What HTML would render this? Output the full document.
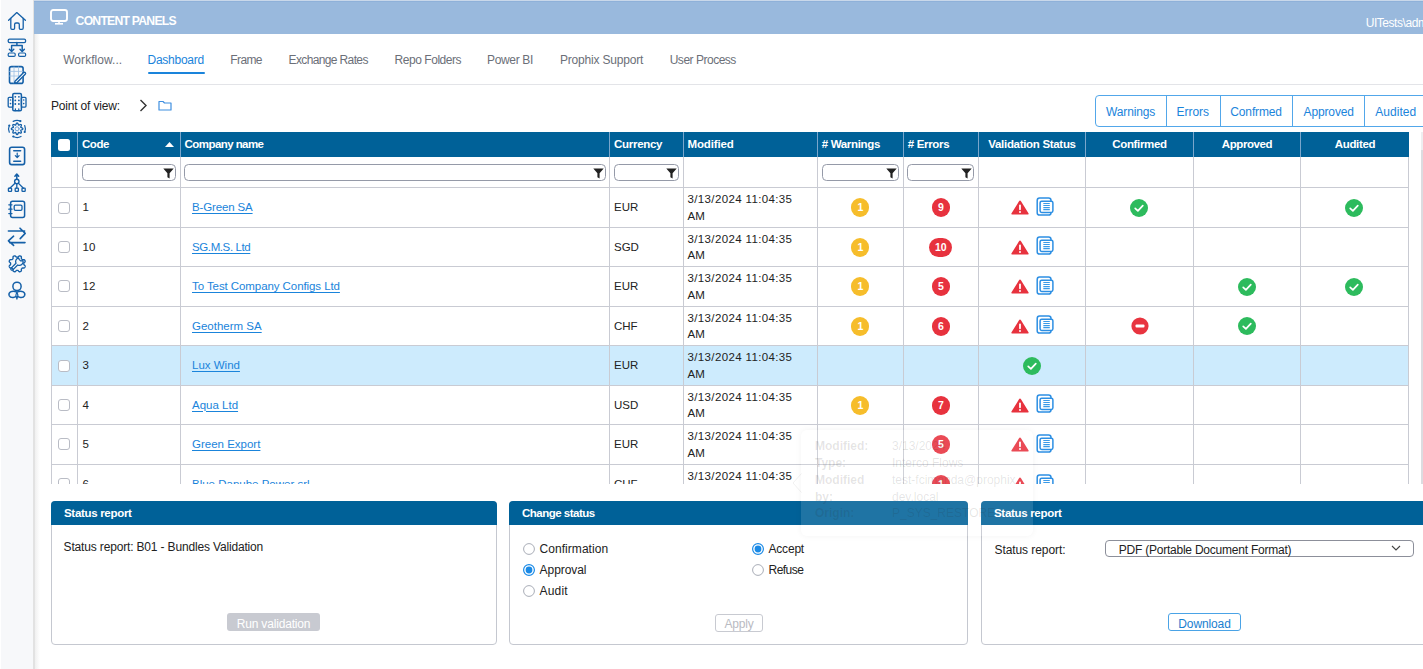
<!DOCTYPE html><html><head><meta charset="utf-8"><style>
*{box-sizing:border-box;margin:0;padding:0}
html,body{width:1423px;height:669px;overflow:hidden}
body{position:relative;background:#fff;font-family:"Liberation Sans", sans-serif;color:#222;}
.ab{position:absolute}
.t{position:absolute;white-space:nowrap;line-height:1}
</style></head><body>
<div class="ab" style="left:1px;top:0;width:32px;height:669px;background:#f7f8fa"></div>
<div class="ab" style="left:33px;top:0;width:2px;height:669px;background:#e2e2e2"></div>
<div class="ab" style="left:35px;top:34px;width:5px;height:635px;background:linear-gradient(90deg,#f0f0f0,#fff)"></div>
<svg class="ab" style="left:0px;top:0px" width="34" height="310" viewBox="0 0 34 310" fill="none" stroke="#1560a8" stroke-width="1.3" stroke-linecap="round" stroke-linejoin="round">
<path d="M8.6 20.2 L16.8 12.6 L25.4 20.2"/>
<path d="M10.8 18.3 V28 Q10.8 29.3 12 29.3 H13.6 Q14.6 29.3 14.6 28.3 V24.5 Q14.6 23 16 23 H17.8 Q19.3 23 19.3 24.5 V28.3 Q19.3 29.3 20.3 29.3 H22 Q23.2 29.3 23.2 28 V18.3"/>
<rect x="8.2" y="39.2" width="17.4" height="3.4" rx="1.4" stroke-width="1.3"/>
<path d="M16.9 42.6 V45.2 M11.6 51 V45.4 H22.2 V51" stroke-width="1.5"/>
<path d="M9.4 49.3 L11.6 51.6 L13.8 49.3 M20 49.3 L22.2 51.6 L24.4 49.3" stroke-width="1.4"/>
<rect x="8.2" y="53" width="7" height="3.4" rx="1.2" stroke-width="1.2"/>
<rect x="18.6" y="53" width="7" height="3.4" rx="1.2" stroke-width="1.2"/>
<rect x="9.5" y="66.6" width="13.6" height="16.8" rx="2" stroke-width="1.6"/>
<path d="M14 67 V83 M18.5 67 V76 M9.6 71.4 H22.8 M9.6 76 H20" stroke="#9cbfe3" stroke-width="0.8"/>
<path d="M15 81.2 L23.6 72.6 Q24.6 71.8 25.3 72.6 Q26 73.4 25.2 74.3 L16.8 82.8 L14.6 83.2 Z" fill="#fff" stroke-width="1.4"/>
<rect x="12.8" y="93.4" width="8.6" height="17.4" rx="1.3" stroke-width="1.5"/>
<rect x="8.2" y="97.3" width="4.6" height="9.8" rx="1" stroke-width="1.3"/>
<rect x="21.4" y="97.3" width="4.6" height="9.8" rx="1" stroke-width="1.3"/>
<path d="M15.4 108.8 V110.6 M18.8 108.8 V110.6" stroke-width="1.2"/>
<g fill="#1560a8" stroke="none"><circle cx="15.3" cy="96.8" r="0.9"/><circle cx="18.9" cy="96.8" r="0.9"/><circle cx="15.3" cy="100.4" r="0.9"/><circle cx="18.9" cy="100.4" r="0.9"/><circle cx="15.3" cy="104" r="0.9"/><circle cx="18.9" cy="104" r="0.9"/><circle cx="10.5" cy="100" r="0.8"/><circle cx="10.5" cy="103.6" r="0.8"/><circle cx="23.7" cy="100" r="0.8"/><circle cx="23.7" cy="103.6" r="0.8"/></g>
<path d="M22.90 128.80 L22.85 129.03 L22.71 129.24 L22.49 129.44 L22.21 129.61 L21.91 129.76 L21.59 129.88 L21.31 129.99 L21.07 130.09 L20.89 130.20 L20.80 130.33 L20.77 130.49 L20.82 130.69 L20.91 130.94 L21.04 131.21 L21.17 131.52 L21.29 131.84 L21.36 132.16 L21.38 132.46 L21.33 132.71 L21.20 132.90 L21.01 133.03 L20.76 133.08 L20.46 133.06 L20.14 132.99 L19.82 132.87 L19.51 132.74 L19.24 132.61 L18.99 132.52 L18.79 132.47 L18.63 132.50 L18.50 132.59 L18.39 132.77 L18.29 133.01 L18.18 133.29 L18.06 133.61 L17.91 133.91 L17.74 134.19 L17.54 134.41 L17.33 134.55 L17.10 134.60 L16.87 134.55 L16.66 134.41 L16.46 134.19 L16.29 133.91 L16.14 133.61 L16.02 133.29 L15.91 133.01 L15.81 132.77 L15.70 132.59 L15.57 132.50 L15.41 132.47 L15.21 132.52 L14.96 132.61 L14.69 132.74 L14.38 132.87 L14.06 132.99 L13.74 133.06 L13.44 133.08 L13.19 133.03 L13.00 132.90 L12.87 132.71 L12.82 132.46 L12.84 132.16 L12.91 131.84 L13.03 131.52 L13.16 131.21 L13.29 130.94 L13.38 130.69 L13.43 130.49 L13.40 130.33 L13.31 130.20 L13.13 130.09 L12.89 129.99 L12.61 129.88 L12.29 129.76 L11.99 129.61 L11.71 129.44 L11.49 129.24 L11.35 129.03 L11.30 128.80 L11.35 128.57 L11.49 128.36 L11.71 128.16 L11.99 127.99 L12.29 127.84 L12.61 127.72 L12.89 127.61 L13.13 127.51 L13.31 127.40 L13.40 127.27 L13.43 127.11 L13.38 126.91 L13.29 126.66 L13.16 126.39 L13.03 126.08 L12.91 125.76 L12.84 125.44 L12.82 125.14 L12.87 124.89 L13.00 124.70 L13.19 124.57 L13.44 124.52 L13.74 124.54 L14.06 124.61 L14.38 124.73 L14.69 124.86 L14.96 124.99 L15.21 125.08 L15.41 125.13 L15.57 125.10 L15.70 125.01 L15.81 124.83 L15.91 124.59 L16.02 124.31 L16.14 123.99 L16.29 123.69 L16.46 123.41 L16.66 123.19 L16.87 123.05 L17.10 123.00 L17.33 123.05 L17.54 123.19 L17.74 123.41 L17.91 123.69 L18.06 123.99 L18.18 124.31 L18.29 124.59 L18.39 124.83 L18.50 125.01 L18.63 125.10 L18.79 125.13 L18.99 125.08 L19.24 124.99 L19.51 124.86 L19.82 124.73 L20.14 124.61 L20.46 124.54 L20.76 124.52 L21.01 124.57 L21.20 124.70 L21.33 124.89 L21.38 125.14 L21.36 125.44 L21.29 125.76 L21.17 126.08 L21.04 126.39 L20.91 126.66 L20.82 126.91 L20.77 127.11 L20.80 127.27 L20.89 127.40 L21.07 127.51 L21.31 127.61 L21.59 127.72 L21.91 127.84 L22.21 127.99 L22.49 128.16 L22.71 128.36 L22.85 128.57 Z" stroke-width="1.3"/>
<circle cx="17.1" cy="128.8" r="2" stroke="#6fa0d6" stroke-width="1"/>
<path d="M13.2 121.4 A8.2 8.2 0 0 1 20.4 121.1 M24.7 125.5 A8.2 8.2 0 0 1 24.7 132 M21 136.5 A8.2 8.2 0 0 1 13.3 136.5 M9.3 132.2 A8.2 8.2 0 0 1 9.3 125.5" stroke-width="1.2"/>
<g fill="#1560a8" stroke="none"><circle cx="20.4" cy="121.1" r="1.1"/><circle cx="24.7" cy="132" r="1.1"/><circle cx="13.3" cy="136.5" r="1.1"/><circle cx="9.3" cy="125.5" r="1.1"/></g>
<rect x="9.6" y="147.2" width="15" height="17.4" rx="2.2" stroke-width="1.6"/>
<path d="M13.8 150.8 H20.6 M13.8 161.2 H20.6" stroke-width="1.6"/>
<path d="M17.2 153 V157.4 M15.3 155.6 L17.2 157.5 L19.1 155.6" stroke-width="1.2"/>
<path d="M16.8 179.2 V174.5 M14.9 176.2 L16.8 174 L18.7 176.2" stroke-width="1.5"/>
<circle cx="16.8" cy="181.5" r="2.2" stroke-width="1.4"/>
<path d="M15.3 183.1 L9.8 188.2 M16.8 183.7 V188.2 M18.3 183.1 L23.4 188.2" stroke-width="1.3"/>
<rect x="8.4" y="188.2" width="3.2" height="3.2" rx="0.6" stroke-width="1.3"/>
<rect x="15.2" y="188.2" width="3.2" height="3.2" rx="0.6" stroke-width="1.3"/>
<rect x="22" y="188.2" width="3.2" height="3.2" rx="0.6" stroke-width="1.3"/>
<rect x="10.6" y="201.3" width="14" height="16.3" rx="2" stroke-width="1.5"/>
<rect x="14.2" y="205.1" width="7.8" height="5.2" rx="1.2" stroke-width="1.3"/>
<path d="M8.8 204.8 H12 M8.8 209.2 H12 M8.8 213.6 H12" stroke-width="1.3"/>
<path d="M8.4 231 H24.6 M20 228.2 L25.2 233.4 L20.2 238.6" stroke-width="1.6"/>
<path d="M25 242.6 H9.6 M13.6 236.2 L8.4 240.8 L13.6 245.4" stroke-width="1.6"/>
<path d="M23.80 263.80 L23.80 264.06 L23.82 264.32 L23.88 264.59 L24.10 264.89 L24.56 265.26 L24.99 265.67 L25.16 266.05 L25.15 266.38 L25.07 266.70 L24.96 267.01 L24.82 267.31 L24.65 267.60 L24.42 267.84 L24.03 267.99 L23.44 267.97 L22.85 267.91 L22.48 267.97 L22.25 268.11 L22.05 268.28 L21.87 268.47 L21.68 268.65 L21.51 268.85 L21.37 269.08 L21.31 269.45 L21.37 270.04 L21.39 270.63 L21.24 271.02 L21.00 271.25 L20.71 271.42 L20.41 271.56 L20.10 271.67 L19.78 271.75 L19.45 271.76 L19.07 271.59 L18.66 271.16 L18.29 270.70 L17.99 270.48 L17.72 270.42 L17.46 270.40 L17.20 270.40 L16.94 270.40 L16.68 270.42 L16.41 270.48 L16.11 270.70 L15.74 271.16 L15.33 271.59 L14.95 271.76 L14.62 271.75 L14.30 271.67 L13.99 271.56 L13.69 271.42 L13.40 271.25 L13.16 271.02 L13.01 270.63 L13.03 270.04 L13.09 269.45 L13.03 269.08 L12.89 268.85 L12.72 268.65 L12.53 268.47 L12.35 268.28 L12.15 268.11 L11.92 267.97 L11.55 267.91 L10.96 267.97 L10.37 267.99 L9.98 267.84 L9.75 267.60 L9.58 267.31 L9.44 267.01 L9.33 266.70 L9.25 266.38 L9.24 266.05 L9.41 265.67 L9.84 265.26 L10.30 264.89 L10.52 264.59 L10.58 264.32 L10.60 264.06 L10.60 263.80 L10.60 263.54 L10.58 263.28 L10.52 263.01 L10.30 262.71 L9.84 262.34 L9.41 261.93 L9.24 261.55 L9.25 261.22 L9.33 260.90 L9.44 260.59 L9.58 260.29 L9.75 260.00 L9.98 259.76 L10.37 259.61 L10.96 259.63 L11.55 259.69 L11.92 259.63 L12.15 259.49 L12.35 259.32 L12.53 259.13 L12.72 258.95 L12.89 258.75 L13.03 258.52 L13.09 258.15 L13.03 257.56 L13.01 256.97 L13.16 256.58 L13.40 256.35 L13.69 256.18 L13.99 256.04 L14.30 255.93 L14.62 255.85 L14.95 255.84 L15.33 256.01 L15.74 256.44 L16.11 256.90 L16.41 257.12 L16.68 257.18 L16.94 257.20 L17.20 257.20 L17.46 257.20 L17.72 257.18 L17.99 257.12 L18.29 256.90 L18.66 256.44 L19.07 256.01 L19.45 255.84 L19.78 255.85 L20.10 255.93 L20.41 256.04 L20.71 256.18 L21.00 256.35 L21.24 256.58 L21.39 256.97 L21.37 257.56 L21.31 258.15 L21.37 258.52 L21.51 258.75 L21.68 258.95 L21.87 259.13 L22.05 259.32 L22.25 259.49 L22.48 259.63 L22.85 259.69 L23.44 259.63 L24.03 259.61 L24.42 259.76 L24.65 260.00 L24.82 260.29 L24.96 260.59 L25.07 260.90 L25.15 261.22 L25.16 261.55 L24.99 261.93 L24.56 262.34 L24.10 262.71 L23.88 263.01 L23.82 263.28 L23.80 263.54 Z" stroke-width="1.35"/>
<path d="M16.0 263.3 L11.13 268.15 A1.2 1.2 0 0 0 12.83 269.85 L17.7 265.0 A3.8 3.8 0 0 0 23.07 260.62 L20.6 260.9 L19.4 259.6 L18.42 257.93 A3.8 3.8 0 0 0 16.0 263.3 Z" stroke-width="1.3"/>
<rect x="12.9" y="282.2" width="8.2" height="8.4" rx="4" stroke-width="1.5"/>
<path d="M16.9 292.2 Q13.5 290.6 10.5 291.9 Q8.3 293.2 9.2 295.6 Q10.2 297.7 13.2 297.5 Q15.6 297.2 16.9 295.6 Q18.2 297.2 20.6 297.5 Q23.6 297.7 24.6 295.6 Q25.5 293.2 23.3 291.9 Q20.3 290.6 16.9 292.2 Z" stroke-width="1.45"/>
<path d="M16.9 291.8 L15.9 295.2 L16.9 299.2 L17.9 295.2 Z" fill="#fff" stroke-width="1.2"/>
</svg>
<div class="ab" style="left:34px;top:0;width:1389px;height:1px;background:#c9d8ea"></div>
<div class="ab" style="left:34px;top:1px;width:1389px;height:33px;background:#99b9dd;border-top:1px solid #8fb1d9"></div>
<svg class="ab" style="left:50px;top:9px" width="18" height="16" viewBox="0 0 18 16"><rect x="1" y="1" width="16" height="11" rx="2.2" fill="none" stroke="#fff" stroke-width="1.9"/><rect x="8.2" y="12" width="1.6" height="2.5" fill="#fff"/><rect x="5" y="14" width="8" height="1.6" fill="#fff"/></svg>
<div class="t" style="left:75.6px;top:14.67px;font-size:12.2px;font-weight:700;color:#fff;letter-spacing:-0.756px;">CONTENT PANELS</div>
<div class="t" style="left:1365.7px;top:17.34px;font-size:12px;font-weight:400;color:#fff;letter-spacing:-0.45px;">UITests\admin</div>
<div class="t" style="left:63.2px;top:54.24px;font-size:12px;font-weight:400;color:#6b6f78;letter-spacing:0.053px;">Workflow...</div>
<div class="t" style="left:147.5px;top:54.24px;font-size:12px;font-weight:400;color:#1a84db;letter-spacing:-0.252px;">Dashboard</div>
<div class="t" style="left:230.3px;top:54.24px;font-size:12px;font-weight:400;color:#6b6f78;letter-spacing:-0.618px;">Frame</div>
<div class="t" style="left:288.6px;top:54.24px;font-size:12px;font-weight:400;color:#6b6f78;letter-spacing:-0.636px;">Exchange Rates</div>
<div class="t" style="left:394.6px;top:54.24px;font-size:12px;font-weight:400;color:#6b6f78;letter-spacing:-0.459px;">Repo Folders</div>
<div class="t" style="left:487px;top:54.24px;font-size:12px;font-weight:400;color:#6b6f78;letter-spacing:-0.341px;">Power BI</div>
<div class="t" style="left:560px;top:54.24px;font-size:12px;font-weight:400;color:#6b6f78;letter-spacing:-0.190px;">Prophix Support</div>
<div class="t" style="left:669.7px;top:54.24px;font-size:12px;font-weight:400;color:#6b6f78;letter-spacing:-0.485px;">User Process</div>
<div class="ab" style="left:147.5px;top:72px;width:57px;height:2.2px;background:#1a84db;border-radius:1px"></div>
<div class="ab" style="left:51px;top:84px;width:1372px;height:1px;background:#e3e4e8"></div>
<div class="t" style="left:51px;top:100.14px;font-size:12px;font-weight:400;color:#222;letter-spacing:-0.183px;">Point of view:</div>
<svg class="ab" style="left:139px;top:99px" width="9" height="13" viewBox="0 0 9 13"><path d="M1.5 1 L7 6.5 L1.5 12" fill="none" stroke="#333" stroke-width="1.4"/></svg>
<svg class="ab" style="left:158px;top:100px" width="14" height="11" viewBox="0 0 14 11"><path d="M1 1.5 H5 L6.5 3 H13 V10 H1 Z" fill="none" stroke="#3f8fe0" stroke-width="1.2" stroke-linejoin="round"/></svg>
<div class="ab" style="left:1095px;top:95px;width:340px;height:32px;border:1px solid #52a7ea;border-radius:4px"></div>
<div class="t" style="left:1106px;top:105.84px;font-size:12px;font-weight:400;color:#1a84db;letter-spacing:-0.136px;">Warnings</div>
<div class="ab" style="left:1166px;top:95px;width:1px;height:32px;background:#52a7ea"></div>
<div class="t" style="left:1176.6px;top:105.84px;font-size:12px;font-weight:400;color:#1a84db;letter-spacing:-0.054px;">Errors</div>
<div class="ab" style="left:1220px;top:95px;width:1px;height:32px;background:#52a7ea"></div>
<div class="t" style="left:1230.3px;top:105.84px;font-size:12px;font-weight:400;color:#1a84db;letter-spacing:-0.141px;">Confrmed</div>
<div class="ab" style="left:1292px;top:95px;width:1px;height:32px;background:#52a7ea"></div>
<div class="t" style="left:1303.5px;top:105.84px;font-size:12px;font-weight:400;color:#1a84db;letter-spacing:-0.125px;">Approved</div>
<div class="ab" style="left:1364px;top:95px;width:1px;height:32px;background:#52a7ea"></div>
<div class="t" style="left:1375.3px;top:105.84px;font-size:12px;font-weight:400;color:#1a84db;letter-spacing:0.016px;">Audited</div>
<div class="ab" style="left:52px;top:346px;width:1356px;height:39px;background:#cdebfd"></div>
<div class="ab" style="left:51px;top:132px;width:1358px;height:25px;background:#006198"></div>
<div class="ab" style="left:77px;top:132px;width:1px;height:25px;background:#7aa6cc"></div>
<div class="ab" style="left:180px;top:132px;width:1px;height:25px;background:#7aa6cc"></div>
<div class="ab" style="left:609px;top:132px;width:1px;height:25px;background:#7aa6cc"></div>
<div class="ab" style="left:683px;top:132px;width:1px;height:25px;background:#7aa6cc"></div>
<div class="ab" style="left:817px;top:132px;width:1px;height:25px;background:#7aa6cc"></div>
<div class="ab" style="left:903px;top:132px;width:1px;height:25px;background:#7aa6cc"></div>
<div class="ab" style="left:978px;top:132px;width:1px;height:25px;background:#7aa6cc"></div>
<div class="ab" style="left:1085px;top:132px;width:1px;height:25px;background:#7aa6cc"></div>
<div class="ab" style="left:1193px;top:132px;width:1px;height:25px;background:#7aa6cc"></div>
<div class="ab" style="left:1300px;top:132px;width:1px;height:25px;background:#7aa6cc"></div>
<div class="ab" style="left:51px;top:157px;width:1px;height:327px;background:#c9cbd3"></div>
<div class="ab" style="left:77px;top:157px;width:1px;height:327px;background:#c9cbd3"></div>
<div class="ab" style="left:180px;top:157px;width:1px;height:327px;background:#c9cbd3"></div>
<div class="ab" style="left:609px;top:157px;width:1px;height:327px;background:#c9cbd3"></div>
<div class="ab" style="left:683px;top:157px;width:1px;height:327px;background:#c9cbd3"></div>
<div class="ab" style="left:817px;top:157px;width:1px;height:327px;background:#c9cbd3"></div>
<div class="ab" style="left:903px;top:157px;width:1px;height:327px;background:#c9cbd3"></div>
<div class="ab" style="left:978px;top:157px;width:1px;height:327px;background:#c9cbd3"></div>
<div class="ab" style="left:1085px;top:157px;width:1px;height:327px;background:#c9cbd3"></div>
<div class="ab" style="left:1193px;top:157px;width:1px;height:327px;background:#c9cbd3"></div>
<div class="ab" style="left:1300px;top:157px;width:1px;height:327px;background:#c9cbd3"></div>
<div class="ab" style="left:1408px;top:157px;width:1px;height:327px;background:#c9cbd3"></div>
<div class="ab" style="left:51px;top:187px;width:1358px;height:1px;background:#c9cbd3"></div>
<div class="ab" style="left:51px;top:227px;width:1358px;height:1px;background:#c9cbd3"></div>
<div class="ab" style="left:51px;top:266px;width:1358px;height:1px;background:#c9cbd3"></div>
<div class="ab" style="left:51px;top:306px;width:1358px;height:1px;background:#c9cbd3"></div>
<div class="ab" style="left:51px;top:345px;width:1358px;height:1px;background:#c9cbd3"></div>
<div class="ab" style="left:51px;top:385px;width:1358px;height:1px;background:#c9cbd3"></div>
<div class="ab" style="left:51px;top:424px;width:1358px;height:1px;background:#c9cbd3"></div>
<div class="ab" style="left:51px;top:464px;width:1358px;height:1px;background:#c9cbd3"></div>
<div class="ab" style="left:1421px;top:132px;width:2px;height:18px;background:#eeeef0"></div>
<div class="ab" style="left:1421px;top:150px;width:2px;height:334px;background:#dcdce0"></div>
<div class="t" style="left:82px;top:139.17px;font-size:11.5px;font-weight:700;color:#fff;letter-spacing:-0.450px;">Code</div>
<div class="t" style="left:184.6px;top:139.17px;font-size:11.5px;font-weight:700;color:#fff;letter-spacing:-0.567px;">Company name</div>
<div class="t" style="left:614.1px;top:139.17px;font-size:11.5px;font-weight:700;color:#fff;letter-spacing:-0.300px;">Currency</div>
<div class="t" style="left:687.5px;top:139.17px;font-size:11.5px;font-weight:700;color:#fff;letter-spacing:-0.154px;">Modified</div>
<div class="t" style="left:821.8px;top:139.17px;font-size:11.5px;font-weight:700;color:#fff;letter-spacing:-0.340px;"># Warnings</div>
<div class="t" style="left:907.8px;top:139.17px;font-size:11.5px;font-weight:700;color:#fff;letter-spacing:-0.330px;"># Errors</div>
<div class="t" style="left:978px;width:108px;text-align:center;top:139.17px;font-size:11.5px;font-weight:700;color:#fff;letter-spacing:-0.311px;">Validation Status</div>
<div class="t" style="left:1085px;width:109px;text-align:center;top:139.17px;font-size:11.5px;font-weight:700;color:#fff;letter-spacing:-0.350px;">Confirmed</div>
<div class="t" style="left:1193px;width:108px;text-align:center;top:139.17px;font-size:11.5px;font-weight:700;color:#fff;letter-spacing:-0.425px;">Approved</div>
<div class="t" style="left:1300px;width:110px;text-align:center;top:139.17px;font-size:11.5px;font-weight:700;color:#fff;letter-spacing:-0.302px;">Audited</div>
<div class="ab" style="left:58px;top:139px;width:12px;height:12px;background:#fff;border-radius:2.5px"></div>
<svg class="ab" style="left:164.5px;top:142px" width="9" height="5" viewBox="0 0 9 5"><path d="M0 5 L4.5 0 L9 5 Z" fill="#fff"/></svg>
<div class="ab" style="left:82px;top:164px;width:94px;height:17px;border:1.2px solid #959aa8;border-radius:4.5px;background:#fff"></div>
<svg class="ab" style="left:162.5px;top:168px" width="11" height="11" viewBox="0 0 11 11"><path d="M0.3 0.5 H10.7 L6.6 5.2 V10.5 L4.4 9.2 V5.2 Z" fill="#222"/></svg>
<div class="ab" style="left:184px;top:164px;width:422px;height:17px;border:1.2px solid #959aa8;border-radius:4.5px;background:#fff"></div>
<svg class="ab" style="left:592.5px;top:168px" width="11" height="11" viewBox="0 0 11 11"><path d="M0.3 0.5 H10.7 L6.6 5.2 V10.5 L4.4 9.2 V5.2 Z" fill="#222"/></svg>
<div class="ab" style="left:614px;top:164px;width:65px;height:17px;border:1.2px solid #959aa8;border-radius:4.5px;background:#fff"></div>
<svg class="ab" style="left:665.5px;top:168px" width="11" height="11" viewBox="0 0 11 11"><path d="M0.3 0.5 H10.7 L6.6 5.2 V10.5 L4.4 9.2 V5.2 Z" fill="#222"/></svg>
<div class="ab" style="left:822px;top:164px;width:77px;height:17px;border:1.2px solid #959aa8;border-radius:4.5px;background:#fff"></div>
<svg class="ab" style="left:885.5px;top:168px" width="11" height="11" viewBox="0 0 11 11"><path d="M0.3 0.5 H10.7 L6.6 5.2 V10.5 L4.4 9.2 V5.2 Z" fill="#222"/></svg>
<div class="ab" style="left:907px;top:164px;width:67px;height:17px;border:1.2px solid #959aa8;border-radius:4.5px;background:#fff"></div>
<svg class="ab" style="left:960.5px;top:168px" width="11" height="11" viewBox="0 0 11 11"><path d="M0.3 0.5 H10.7 L6.6 5.2 V10.5 L4.4 9.2 V5.2 Z" fill="#222"/></svg>
<div class="ab" style="left:0;top:188px;width:1423px;height:296px;overflow:hidden">
<div class="ab" style="left:58px;top:14px;width:12px;height:12px;border:1px solid #b9bcc5;border-radius:3px;background:#fff"></div>
<div class="t" style="left:82.5px;top:14.27px;font-size:11.5px;font-weight:400;color:#222;">1</div>
<div class="t" style="left:192px;top:14.27px;font-size:11.5px;font-weight:400;color:#1a84db;letter-spacing:-0.144px;text-decoration:underline;text-underline-offset:2px;text-decoration-thickness:1px;">B-Green SA</div>
<div class="t" style="left:614px;top:14.27px;font-size:11.5px;font-weight:400;color:#222;">EUR</div>
<div class="t" style="left:687.5px;top:6.17px;font-size:11.5px;font-weight:400;color:#222;letter-spacing:0.366px;">3/13/2024 11:04:35</div>
<div class="t" style="left:687.5px;top:22.77px;font-size:11.5px;font-weight:400;color:#222;">AM</div>
<div class="ab" style="left:851.4px;top:10.0px;width:18px;height:19px;border-radius:9.5px;background:#f6bd2b;color:#fff;font-size:10.5px;font-weight:700;text-align:center;line-height:19px">1</div>
<div class="ab" style="left:931.8px;top:10.0px;width:18px;height:19px;border-radius:9.5px;background:#e7323e;color:#fff;font-size:10.5px;font-weight:700;text-align:center;line-height:19px">9</div>
<svg class="ab" style="left:1010.5px;top:12.099999999999994px" width="18" height="15" viewBox="0 0 18 15"><path d="M9 0.6 Q9.6 0.6 10 1.3 L17.6 13.6 Q17.9 14.4 17 14.4 H1 Q0.1 14.4 0.4 13.6 L8 1.3 Q8.4 0.6 9 0.6 Z" fill="#e7323e"/><rect x="8.1" y="4.6" width="1.8" height="5.6" rx="0.9" fill="#fff"/><circle cx="9" cy="12" r="1" fill="#fff"/></svg>
<svg class="ab" style="left:1036px;top:8.699999999999989px" width="18" height="19" viewBox="0 0 18 19"><rect x="1.2" y="1.1" width="13.8" height="17" rx="2.4" fill="none" stroke="#2d8fe3" stroke-width="1.5"/><rect x="4.1" y="4.2" width="12.8" height="11.2" rx="1.6" fill="#fff" stroke="#2d8fe3" stroke-width="1.5"/><path d="M7.3 6.5 H13.8 M7.3 8.5 H13.8 M7.3 10.6 H13.8 M7.3 12.6 H13.8" stroke="#3a9ae8" stroke-width="1.1"/></svg>
<svg class="ab" style="left:1130px;top:10.5px" width="18" height="18" viewBox="0 0 18 18"><circle cx="9" cy="9" r="9" fill="#2dbb5d"/><path d="M5.2 9.3 L7.9 11.8 L12.8 6.6" fill="none" stroke="#fff" stroke-width="1.7" stroke-linecap="round" stroke-linejoin="round"/></svg>
<svg class="ab" style="left:1345px;top:10.5px" width="18" height="18" viewBox="0 0 18 18"><circle cx="9" cy="9" r="9" fill="#2dbb5d"/><path d="M5.2 9.3 L7.9 11.8 L12.8 6.6" fill="none" stroke="#fff" stroke-width="1.7" stroke-linecap="round" stroke-linejoin="round"/></svg>
<div class="ab" style="left:58px;top:53px;width:12px;height:12px;border:1px solid #b9bcc5;border-radius:3px;background:#fff"></div>
<div class="t" style="left:82.5px;top:53.77px;font-size:11.5px;font-weight:400;color:#222;">10</div>
<div class="t" style="left:192px;top:53.77px;font-size:11.5px;font-weight:400;color:#1a84db;letter-spacing:-0.394px;text-decoration:underline;text-underline-offset:2px;text-decoration-thickness:1px;">SG.M.S. Ltd</div>
<div class="t" style="left:614px;top:53.77px;font-size:11.5px;font-weight:400;color:#222;">SGD</div>
<div class="t" style="left:687.5px;top:45.67px;font-size:11.5px;font-weight:400;color:#222;letter-spacing:0.366px;">3/13/2024 11:04:35</div>
<div class="t" style="left:687.5px;top:62.27px;font-size:11.5px;font-weight:400;color:#222;">AM</div>
<div class="ab" style="left:851.4px;top:49.5px;width:18px;height:19px;border-radius:9.5px;background:#f6bd2b;color:#fff;font-size:10.5px;font-weight:700;text-align:center;line-height:19px">1</div>
<div class="ab" style="left:929.3px;top:49.5px;width:23px;height:19px;border-radius:9.5px;background:#e7323e;color:#fff;font-size:10.5px;font-weight:700;text-align:center;line-height:19px">10</div>
<svg class="ab" style="left:1010.5px;top:51.599999999999994px" width="18" height="15" viewBox="0 0 18 15"><path d="M9 0.6 Q9.6 0.6 10 1.3 L17.6 13.6 Q17.9 14.4 17 14.4 H1 Q0.1 14.4 0.4 13.6 L8 1.3 Q8.4 0.6 9 0.6 Z" fill="#e7323e"/><rect x="8.1" y="4.6" width="1.8" height="5.6" rx="0.9" fill="#fff"/><circle cx="9" cy="12" r="1" fill="#fff"/></svg>
<svg class="ab" style="left:1036px;top:48.19999999999999px" width="18" height="19" viewBox="0 0 18 19"><rect x="1.2" y="1.1" width="13.8" height="17" rx="2.4" fill="none" stroke="#2d8fe3" stroke-width="1.5"/><rect x="4.1" y="4.2" width="12.8" height="11.2" rx="1.6" fill="#fff" stroke="#2d8fe3" stroke-width="1.5"/><path d="M7.3 6.5 H13.8 M7.3 8.5 H13.8 M7.3 10.6 H13.8 M7.3 12.6 H13.8" stroke="#3a9ae8" stroke-width="1.1"/></svg>
<div class="ab" style="left:58px;top:92px;width:12px;height:12px;border:1px solid #b9bcc5;border-radius:3px;background:#fff"></div>
<div class="t" style="left:82.5px;top:93.27px;font-size:11.5px;font-weight:400;color:#222;">12</div>
<div class="t" style="left:192px;top:93.27px;font-size:11.5px;font-weight:400;color:#1a84db;letter-spacing:-0.078px;text-decoration:underline;text-underline-offset:2px;text-decoration-thickness:1px;">To Test Company Configs Ltd</div>
<div class="t" style="left:614px;top:93.27px;font-size:11.5px;font-weight:400;color:#222;">EUR</div>
<div class="t" style="left:687.5px;top:85.17px;font-size:11.5px;font-weight:400;color:#222;letter-spacing:0.366px;">3/13/2024 11:04:35</div>
<div class="t" style="left:687.5px;top:101.77px;font-size:11.5px;font-weight:400;color:#222;">AM</div>
<div class="ab" style="left:851.4px;top:89.0px;width:18px;height:19px;border-radius:9.5px;background:#f6bd2b;color:#fff;font-size:10.5px;font-weight:700;text-align:center;line-height:19px">1</div>
<div class="ab" style="left:931.8px;top:89.0px;width:18px;height:19px;border-radius:9.5px;background:#e7323e;color:#fff;font-size:10.5px;font-weight:700;text-align:center;line-height:19px">5</div>
<svg class="ab" style="left:1010.5px;top:91.10000000000002px" width="18" height="15" viewBox="0 0 18 15"><path d="M9 0.6 Q9.6 0.6 10 1.3 L17.6 13.6 Q17.9 14.4 17 14.4 H1 Q0.1 14.4 0.4 13.6 L8 1.3 Q8.4 0.6 9 0.6 Z" fill="#e7323e"/><rect x="8.1" y="4.6" width="1.8" height="5.6" rx="0.9" fill="#fff"/><circle cx="9" cy="12" r="1" fill="#fff"/></svg>
<svg class="ab" style="left:1036px;top:87.69999999999999px" width="18" height="19" viewBox="0 0 18 19"><rect x="1.2" y="1.1" width="13.8" height="17" rx="2.4" fill="none" stroke="#2d8fe3" stroke-width="1.5"/><rect x="4.1" y="4.2" width="12.8" height="11.2" rx="1.6" fill="#fff" stroke="#2d8fe3" stroke-width="1.5"/><path d="M7.3 6.5 H13.8 M7.3 8.5 H13.8 M7.3 10.6 H13.8 M7.3 12.6 H13.8" stroke="#3a9ae8" stroke-width="1.1"/></svg>
<svg class="ab" style="left:1238px;top:89.5px" width="18" height="18" viewBox="0 0 18 18"><circle cx="9" cy="9" r="9" fill="#2dbb5d"/><path d="M5.2 9.3 L7.9 11.8 L12.8 6.6" fill="none" stroke="#fff" stroke-width="1.7" stroke-linecap="round" stroke-linejoin="round"/></svg>
<svg class="ab" style="left:1345px;top:89.5px" width="18" height="18" viewBox="0 0 18 18"><circle cx="9" cy="9" r="9" fill="#2dbb5d"/><path d="M5.2 9.3 L7.9 11.8 L12.8 6.6" fill="none" stroke="#fff" stroke-width="1.7" stroke-linecap="round" stroke-linejoin="round"/></svg>
<div class="ab" style="left:58px;top:132px;width:12px;height:12px;border:1px solid #b9bcc5;border-radius:3px;background:#fff"></div>
<div class="t" style="left:82.5px;top:132.77px;font-size:11.5px;font-weight:400;color:#222;">2</div>
<div class="t" style="left:192px;top:132.77px;font-size:11.5px;font-weight:400;color:#1a84db;text-decoration:underline;text-underline-offset:2px;text-decoration-thickness:1px;">Geotherm SA</div>
<div class="t" style="left:614px;top:132.77px;font-size:11.5px;font-weight:400;color:#222;">CHF</div>
<div class="t" style="left:687.5px;top:124.67px;font-size:11.5px;font-weight:400;color:#222;letter-spacing:0.366px;">3/13/2024 11:04:35</div>
<div class="t" style="left:687.5px;top:141.27px;font-size:11.5px;font-weight:400;color:#222;">AM</div>
<div class="ab" style="left:851.4px;top:128.5px;width:18px;height:19px;border-radius:9.5px;background:#f6bd2b;color:#fff;font-size:10.5px;font-weight:700;text-align:center;line-height:19px">1</div>
<div class="ab" style="left:931.8px;top:128.5px;width:18px;height:19px;border-radius:9.5px;background:#e7323e;color:#fff;font-size:10.5px;font-weight:700;text-align:center;line-height:19px">6</div>
<svg class="ab" style="left:1010.5px;top:130.60000000000002px" width="18" height="15" viewBox="0 0 18 15"><path d="M9 0.6 Q9.6 0.6 10 1.3 L17.6 13.6 Q17.9 14.4 17 14.4 H1 Q0.1 14.4 0.4 13.6 L8 1.3 Q8.4 0.6 9 0.6 Z" fill="#e7323e"/><rect x="8.1" y="4.6" width="1.8" height="5.6" rx="0.9" fill="#fff"/><circle cx="9" cy="12" r="1" fill="#fff"/></svg>
<svg class="ab" style="left:1036px;top:127.19999999999999px" width="18" height="19" viewBox="0 0 18 19"><rect x="1.2" y="1.1" width="13.8" height="17" rx="2.4" fill="none" stroke="#2d8fe3" stroke-width="1.5"/><rect x="4.1" y="4.2" width="12.8" height="11.2" rx="1.6" fill="#fff" stroke="#2d8fe3" stroke-width="1.5"/><path d="M7.3 6.5 H13.8 M7.3 8.5 H13.8 M7.3 10.6 H13.8 M7.3 12.6 H13.8" stroke="#3a9ae8" stroke-width="1.1"/></svg>
<svg class="ab" style="left:1130.8px;top:129.0px" width="18" height="18" viewBox="0 0 18 18"><circle cx="9" cy="9" r="8.6" fill="#e8343f"/><rect x="4.5" y="7.6" width="9" height="2.8" rx="1" fill="#fff"/></svg>
<svg class="ab" style="left:1238px;top:129.0px" width="18" height="18" viewBox="0 0 18 18"><circle cx="9" cy="9" r="9" fill="#2dbb5d"/><path d="M5.2 9.3 L7.9 11.8 L12.8 6.6" fill="none" stroke="#fff" stroke-width="1.7" stroke-linecap="round" stroke-linejoin="round"/></svg>
<div class="ab" style="left:58px;top:172px;width:12px;height:12px;border:1px solid #b9bcc5;border-radius:3px;background:#fff"></div>
<div class="t" style="left:82.5px;top:172.27px;font-size:11.5px;font-weight:400;color:#222;">3</div>
<div class="t" style="left:192px;top:172.27px;font-size:11.5px;font-weight:400;color:#1a84db;text-decoration:underline;text-underline-offset:2px;text-decoration-thickness:1px;">Lux Wind</div>
<div class="t" style="left:614px;top:172.27px;font-size:11.5px;font-weight:400;color:#222;">EUR</div>
<div class="t" style="left:687.5px;top:164.17px;font-size:11.5px;font-weight:400;color:#222;letter-spacing:0.366px;">3/13/2024 11:04:35</div>
<div class="t" style="left:687.5px;top:180.77px;font-size:11.5px;font-weight:400;color:#222;">AM</div>
<svg class="ab" style="left:1023px;top:168.5px" width="18" height="18" viewBox="0 0 18 18"><circle cx="9" cy="9" r="9" fill="#2dbb5d"/><path d="M5.2 9.3 L7.9 11.8 L12.8 6.6" fill="none" stroke="#fff" stroke-width="1.7" stroke-linecap="round" stroke-linejoin="round"/></svg>
<div class="ab" style="left:58px;top:211px;width:12px;height:12px;border:1px solid #b9bcc5;border-radius:3px;background:#fff"></div>
<div class="t" style="left:82.5px;top:211.77px;font-size:11.5px;font-weight:400;color:#222;">4</div>
<div class="t" style="left:192px;top:211.77px;font-size:11.5px;font-weight:400;color:#1a84db;text-decoration:underline;text-underline-offset:2px;text-decoration-thickness:1px;">Aqua Ltd</div>
<div class="t" style="left:614px;top:211.77px;font-size:11.5px;font-weight:400;color:#222;">USD</div>
<div class="t" style="left:687.5px;top:203.67px;font-size:11.5px;font-weight:400;color:#222;letter-spacing:0.366px;">3/13/2024 11:04:35</div>
<div class="t" style="left:687.5px;top:220.27px;font-size:11.5px;font-weight:400;color:#222;">AM</div>
<div class="ab" style="left:851.4px;top:207.5px;width:18px;height:19px;border-radius:9.5px;background:#f6bd2b;color:#fff;font-size:10.5px;font-weight:700;text-align:center;line-height:19px">1</div>
<div class="ab" style="left:931.8px;top:207.5px;width:18px;height:19px;border-radius:9.5px;background:#e7323e;color:#fff;font-size:10.5px;font-weight:700;text-align:center;line-height:19px">7</div>
<svg class="ab" style="left:1010.5px;top:209.60000000000002px" width="18" height="15" viewBox="0 0 18 15"><path d="M9 0.6 Q9.6 0.6 10 1.3 L17.6 13.6 Q17.9 14.4 17 14.4 H1 Q0.1 14.4 0.4 13.6 L8 1.3 Q8.4 0.6 9 0.6 Z" fill="#e7323e"/><rect x="8.1" y="4.6" width="1.8" height="5.6" rx="0.9" fill="#fff"/><circle cx="9" cy="12" r="1" fill="#fff"/></svg>
<svg class="ab" style="left:1036px;top:206.2px" width="18" height="19" viewBox="0 0 18 19"><rect x="1.2" y="1.1" width="13.8" height="17" rx="2.4" fill="none" stroke="#2d8fe3" stroke-width="1.5"/><rect x="4.1" y="4.2" width="12.8" height="11.2" rx="1.6" fill="#fff" stroke="#2d8fe3" stroke-width="1.5"/><path d="M7.3 6.5 H13.8 M7.3 8.5 H13.8 M7.3 10.6 H13.8 M7.3 12.6 H13.8" stroke="#3a9ae8" stroke-width="1.1"/></svg>
<div class="ab" style="left:58px;top:250px;width:12px;height:12px;border:1px solid #b9bcc5;border-radius:3px;background:#fff"></div>
<div class="t" style="left:82.5px;top:251.27px;font-size:11.5px;font-weight:400;color:#222;">5</div>
<div class="t" style="left:192px;top:251.27px;font-size:11.5px;font-weight:400;color:#1a84db;text-decoration:underline;text-underline-offset:2px;text-decoration-thickness:1px;">Green Export</div>
<div class="t" style="left:614px;top:251.27px;font-size:11.5px;font-weight:400;color:#222;">EUR</div>
<div class="t" style="left:687.5px;top:243.17px;font-size:11.5px;font-weight:400;color:#222;letter-spacing:0.366px;">3/13/2024 11:04:35</div>
<div class="t" style="left:687.5px;top:259.77px;font-size:11.5px;font-weight:400;color:#222;">AM</div>
<div class="ab" style="left:931.8px;top:247.0px;width:18px;height:19px;border-radius:9.5px;background:#e7323e;color:#fff;font-size:10.5px;font-weight:700;text-align:center;line-height:19px">5</div>
<svg class="ab" style="left:1010.5px;top:249.10000000000002px" width="18" height="15" viewBox="0 0 18 15"><path d="M9 0.6 Q9.6 0.6 10 1.3 L17.6 13.6 Q17.9 14.4 17 14.4 H1 Q0.1 14.4 0.4 13.6 L8 1.3 Q8.4 0.6 9 0.6 Z" fill="#e7323e"/><rect x="8.1" y="4.6" width="1.8" height="5.6" rx="0.9" fill="#fff"/><circle cx="9" cy="12" r="1" fill="#fff"/></svg>
<svg class="ab" style="left:1036px;top:245.7px" width="18" height="19" viewBox="0 0 18 19"><rect x="1.2" y="1.1" width="13.8" height="17" rx="2.4" fill="none" stroke="#2d8fe3" stroke-width="1.5"/><rect x="4.1" y="4.2" width="12.8" height="11.2" rx="1.6" fill="#fff" stroke="#2d8fe3" stroke-width="1.5"/><path d="M7.3 6.5 H13.8 M7.3 8.5 H13.8 M7.3 10.6 H13.8 M7.3 12.6 H13.8" stroke="#3a9ae8" stroke-width="1.1"/></svg>
<div class="ab" style="left:58px;top:290px;width:12px;height:12px;border:1px solid #b9bcc5;border-radius:3px;background:#fff"></div>
<div class="t" style="left:82.5px;top:291.27px;font-size:11.5px;font-weight:400;color:#222;">6</div>
<div class="t" style="left:192px;top:291.27px;font-size:11.5px;font-weight:400;color:#1a84db;text-decoration:underline;text-underline-offset:2px;text-decoration-thickness:1px;">Blue Danube Power srl</div>
<div class="t" style="left:614px;top:291.27px;font-size:11.5px;font-weight:400;color:#222;">CHF</div>
<div class="t" style="left:687.5px;top:283.17px;font-size:11.5px;font-weight:400;color:#222;letter-spacing:0.366px;">3/13/2024 11:04:35</div>
<div class="t" style="left:687.5px;top:299.77px;font-size:11.5px;font-weight:400;color:#222;">AM</div>
<div class="ab" style="left:931.8px;top:287.0px;width:18px;height:19px;border-radius:9.5px;background:#e7323e;color:#fff;font-size:10.5px;font-weight:700;text-align:center;line-height:19px">1</div>
<svg class="ab" style="left:1010.5px;top:289.1px" width="18" height="15" viewBox="0 0 18 15"><path d="M9 0.6 Q9.6 0.6 10 1.3 L17.6 13.6 Q17.9 14.4 17 14.4 H1 Q0.1 14.4 0.4 13.6 L8 1.3 Q8.4 0.6 9 0.6 Z" fill="#e7323e"/><rect x="8.1" y="4.6" width="1.8" height="5.6" rx="0.9" fill="#fff"/><circle cx="9" cy="12" r="1" fill="#fff"/></svg>
<svg class="ab" style="left:1036px;top:285.7px" width="18" height="19" viewBox="0 0 18 19"><rect x="1.2" y="1.1" width="13.8" height="17" rx="2.4" fill="none" stroke="#2d8fe3" stroke-width="1.5"/><rect x="4.1" y="4.2" width="12.8" height="11.2" rx="1.6" fill="#fff" stroke="#2d8fe3" stroke-width="1.5"/><path d="M7.3 6.5 H13.8 M7.3 8.5 H13.8 M7.3 10.6 H13.8 M7.3 12.6 H13.8" stroke="#3a9ae8" stroke-width="1.1"/></svg>
</div>
<div class="ab" style="left:51px;top:501px;width:446px;height:144px;border:1px solid #c5c8d0;border-radius:4px;background:#fff"></div>
<div class="ab" style="left:51px;top:501px;width:446px;height:24px;border-radius:4px 4px 0 0;background:#006198"></div>
<div class="t" style="left:64px;top:507.67px;font-size:11.5px;font-weight:700;color:#fff;letter-spacing:-0.307px;">Status report</div>
<div class="ab" style="left:509px;top:501px;width:459px;height:144px;border:1px solid #c5c8d0;border-radius:4px;background:#fff"></div>
<div class="ab" style="left:509px;top:501px;width:459px;height:24px;border-radius:4px 4px 0 0;background:#006198"></div>
<div class="t" style="left:522px;top:507.67px;font-size:11.5px;font-weight:700;color:#fff;letter-spacing:-0.504px;">Change status</div>
<div class="ab" style="left:981px;top:501px;width:454px;height:144px;border:1px solid #c5c8d0;border-radius:4px;background:#fff"></div>
<div class="ab" style="left:981px;top:501px;width:454px;height:24px;border-radius:4px 4px 0 0;background:#006198"></div>
<div class="t" style="left:994px;top:507.67px;font-size:11.5px;font-weight:700;color:#fff;letter-spacing:-0.307px;">Status report</div>
<div class="t" style="left:63.6px;top:540.64px;font-size:12px;font-weight:400;color:#222;letter-spacing:-0.163px;">Status report: B01 - Bundles Validation</div>
<div class="ab" style="left:227px;top:613px;width:93px;height:18px;background:#c8cad1;border-radius:3px"></div>
<div class="t" style="left:227px;width:93px;text-align:center;top:617.84px;font-size:12px;font-weight:400;color:#fff;letter-spacing:-0.166px;">Run validation</div>
<svg class="ab" style="left:522.6px;top:543px" width="12" height="12" viewBox="0 0 12 12"><circle cx="6" cy="6" r="5.4" fill="#fff" stroke="#a9adb7" stroke-width="1"/></svg>
<div class="t" style="left:539.6px;top:543.14px;font-size:12px;font-weight:400;color:#222;letter-spacing:0.043px;">Confirmation</div>
<svg class="ab" style="left:522.6px;top:564px" width="12" height="12" viewBox="0 0 12 12"><circle cx="6" cy="6" r="5.4" fill="#fff" stroke="#1a8ae6" stroke-width="1.2"/><circle cx="6" cy="6" r="3.4" fill="#1a8ae6"/></svg>
<div class="t" style="left:539.6px;top:564.14px;font-size:12px;font-weight:400;color:#222;letter-spacing:-0.068px;">Approval</div>
<svg class="ab" style="left:522.6px;top:585px" width="12" height="12" viewBox="0 0 12 12"><circle cx="6" cy="6" r="5.4" fill="#fff" stroke="#a9adb7" stroke-width="1"/></svg>
<div class="t" style="left:539.6px;top:585.14px;font-size:12px;font-weight:400;color:#222;letter-spacing:0.160px;">Audit</div>
<svg class="ab" style="left:751.5px;top:543px" width="12" height="12" viewBox="0 0 12 12"><circle cx="6" cy="6" r="5.4" fill="#fff" stroke="#1a8ae6" stroke-width="1.2"/><circle cx="6" cy="6" r="3.4" fill="#1a8ae6"/></svg>
<div class="t" style="left:768.5px;top:543.14px;font-size:12px;font-weight:400;color:#222;letter-spacing:-0.197px;">Accept</div>
<svg class="ab" style="left:751.5px;top:564px" width="12" height="12" viewBox="0 0 12 12"><circle cx="6" cy="6" r="5.4" fill="#fff" stroke="#a9adb7" stroke-width="1"/></svg>
<div class="t" style="left:768.5px;top:564.14px;font-size:12px;font-weight:400;color:#222;letter-spacing:-0.526px;">Refuse</div>
<div class="ab" style="left:715px;top:614px;width:48px;height:18px;border:1px solid #c8cad1;border-radius:3px"></div>
<div class="t" style="left:715px;width:48px;text-align:center;top:618.14px;font-size:12px;font-weight:400;color:#b9bbc2;letter-spacing:-0.183px;">Apply</div>
<div class="t" style="left:994.5px;top:544.04px;font-size:12px;font-weight:400;color:#222;letter-spacing:-0.081px;">Status report:</div>
<div class="ab" style="left:1105px;top:540px;width:309px;height:17px;border:1px solid #8c8f9a;border-radius:4px;background:#fff"></div>
<div class="t" style="left:1118.7px;top:544.04px;font-size:12px;font-weight:400;color:#222;letter-spacing:-0.224px;">PDF (Portable Document Format)</div>
<svg class="ab" style="left:1391px;top:545px" width="10" height="6" viewBox="0 0 10 6"><path d="M1 1 L5 5 L9 1" fill="none" stroke="#444" stroke-width="1.1"/></svg>
<div class="ab" style="left:1168px;top:613px;width:73px;height:18px;border:1px solid #4aa3e6;border-radius:3px"></div>
<div class="t" style="left:1168px;width:73px;text-align:center;top:617.84px;font-size:12px;font-weight:400;color:#1a80d0;letter-spacing:-0.125px;">Download</div>
<div class="ab" style="left:801px;top:430px;width:232px;height:106px;border-radius:6px;background:rgba(255,255,255,0.12);box-shadow:0 0 6px rgba(0,0,0,0.05)"></div>
<svg class="ab" style="left:792px;top:473px" width="11" height="20" viewBox="0 0 11 20"><path d="M9.5 0.5 L1 10 L9.5 19.5" fill="none" stroke="rgba(0,0,0,0.06)" stroke-width="1"/></svg>
<div class="t" style="left:815px;top:440.34px;font-size:12px;font-weight:700;color:rgba(40,40,40,0.12);">Modified:</div>
<div class="t" style="left:892px;top:440.34px;font-size:12px;font-weight:400;color:rgba(40,40,40,0.12);">3/13/2024</div>
<div class="t" style="left:815px;top:457.04px;font-size:12px;font-weight:700;color:rgba(40,40,40,0.12);">Type:</div>
<div class="t" style="left:892px;top:457.04px;font-size:12px;font-weight:400;color:rgba(40,40,40,0.12);">Interco Flows</div>
<div class="t" style="left:815px;top:473.84px;font-size:12px;font-weight:700;color:rgba(40,40,40,0.12);">Modified</div>
<div class="t" style="left:892px;top:473.84px;font-size:12px;font-weight:400;color:rgba(40,40,40,0.12);">test-fcimanda@prophix</div>
<div class="t" style="left:815px;top:490.54px;font-size:12px;font-weight:700;color:rgba(40,40,40,0.12);">by:</div>
<div class="t" style="left:892px;top:490.54px;font-size:12px;font-weight:400;color:rgba(40,40,40,0.12);">dev.local</div>
<div class="t" style="left:815px;top:507.24px;font-size:12px;font-weight:700;color:rgba(40,40,40,0.12);">Origin:</div>
<div class="t" style="left:892px;top:507.24px;font-size:12px;font-weight:400;color:rgba(40,40,40,0.12);">P_SYS_RESTORE</div>
</body></html>
